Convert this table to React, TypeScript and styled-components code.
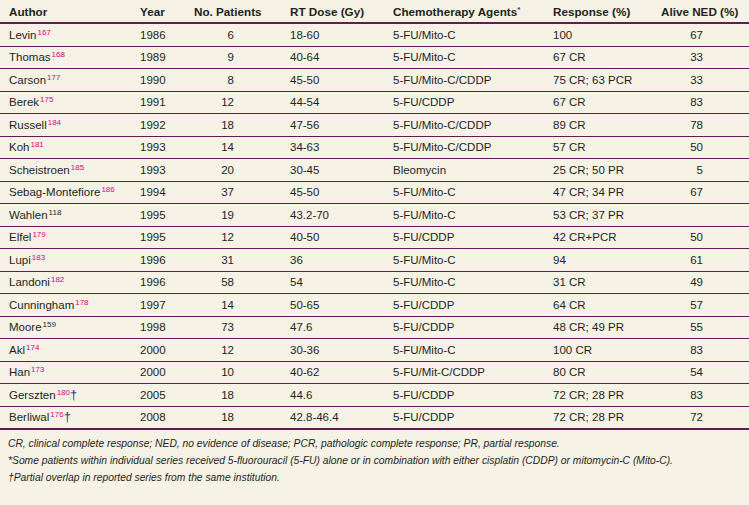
import React from "react";
import styled, { createGlobalStyle } from "styled-components";

const Global = createGlobalStyle`
  html, body { margin: 0; padding: 0; background: #f6f2e6; }
  body { font-family: "Liberation Sans", Arial, sans-serif; color: #231f20; }
`;

const COLS = "131px 54px 96px 103px 160px 108px 1fr";

const Page = styled.div`
  width: 749px;
  height: 505px;
  background: #f6f2e6;
  overflow: hidden;
`;

const HeadRow = styled.div`
  display: grid;
  grid-template-columns: ${COLS};
  padding-left: 9px;
  height: 24px;
  box-sizing: border-box;
  border-bottom: 2px solid #651a58;
  align-items: center;
  font-weight: 700;
  font-size: 11.7px;
`;

const Row = styled.div<{ $last?: boolean }>`
  display: grid;
  grid-template-columns: ${COLS};
  padding-left: 9px;
  height: ${(p) => (p.$last ? "23.5px" : "22.5px")};
  box-sizing: border-box;
  border-bottom: ${(p) => (p.$last ? "2px" : "1px")} solid #651a58;
  align-items: center;
  font-size: 11.5px;
`;

const Cell = styled.div<{ $right?: number }>`
  white-space: nowrap;
  text-align: ${(p) => (p.$right !== undefined ? "right" : "left")};
  padding-right: ${(p) => p.$right ?? 0}px;
`;

const Ref = styled.sup<{ $dark?: boolean }>`
  font-size: 8px;
  color: ${(p) => (p.$dark ? "#231f20" : "#e4007c")};
  vertical-align: 0;
  position: relative;
  top: -4px;
  margin-left: 1px;
  line-height: 0;
`;

const Dagger = styled.span`
  color: #2d2f8e;
  font-size: 13px;
  line-height: 0;
`;

const Star = styled.sup`
  color: #3a2c8c;
  font-size: 8px;
  line-height: 0;
  vertical-align: 0;
  position: relative;
  top: -4px;
`;

const Notes = styled.div`
  padding: 5px 0 0 8px;
  font-style: italic;
  font-size: 10.3px;
  line-height: 17px;
`;

type R = {
  a: string;
  ref: string;
  dark?: boolean;
  dag?: boolean;
  y: string;
  n: string;
  d: string;
  c: string;
  r: string;
  ned: string;
};

const rows: R[] = [
  { a: "Levin", ref: "167", y: "1986", n: "6", d: "18-60", c: "5-FU/Mito-C", r: "100", ned: "67" },
  { a: "Thomas", ref: "168", y: "1989", n: "9", d: "40-64", c: "5-FU/Mito-C", r: "67 CR", ned: "33" },
  { a: "Carson", ref: "177", y: "1990", n: "8", d: "45-50", c: "5-FU/Mito-C/CDDP", r: "75 CR; 63 PCR", ned: "33" },
  { a: "Berek", ref: "175", y: "1991", n: "12", d: "44-54", c: "5-FU/CDDP", r: "67 CR", ned: "83" },
  { a: "Russell", ref: "184", y: "1992", n: "18", d: "47-56", c: "5-FU/Mito-C/CDDP", r: "89 CR", ned: "78" },
  { a: "Koh", ref: "181", y: "1993", n: "14", d: "34-63", c: "5-FU/Mito-C/CDDP", r: "57 CR", ned: "50" },
  { a: "Scheistroen", ref: "185", y: "1993", n: "20", d: "30-45", c: "Bleomycin", r: "25 CR; 50 PR", ned: "5" },
  { a: "Sebag-Montefiore", ref: "186", y: "1994", n: "37", d: "45-50", c: "5-FU/Mito-C", r: "47 CR; 34 PR", ned: "67" },
  { a: "Wahlen", ref: "118", dark: true, y: "1995", n: "19", d: "43.2-70", c: "5-FU/Mito-C", r: "53 CR; 37 PR", ned: "" },
  { a: "Elfel", ref: "179", y: "1995", n: "12", d: "40-50", c: "5-FU/CDDP", r: "42 CR+PCR", ned: "50" },
  { a: "Lupi", ref: "183", y: "1996", n: "31", d: "36", c: "5-FU/Mito-C", r: "94", ned: "61" },
  { a: "Landoni", ref: "182", y: "1996", n: "58", d: "54", c: "5-FU/Mito-C", r: "31 CR", ned: "49" },
  { a: "Cunningham", ref: "178", y: "1997", n: "14", d: "50-65", c: "5-FU/CDDP", r: "64 CR", ned: "57" },
  { a: "Moore", ref: "159", dark: true, y: "1998", n: "73", d: "47.6", c: "5-FU/CDDP", r: "48 CR; 49 PR", ned: "55" },
  { a: "Akl", ref: "174", y: "2000", n: "12", d: "30-36", c: "5-FU/Mito-C", r: "100 CR", ned: "83" },
  { a: "Han", ref: "173", y: "2000", n: "10", d: "40-62", c: "5-FU/Mit-C/CDDP", r: "80 CR", ned: "54" },
  { a: "Gerszten", ref: "180", dag: true, y: "2005", n: "18", d: "44.6", c: "5-FU/CDDP", r: "72 CR; 28 PR", ned: "83" },
  { a: "Berliwal", ref: "176", dag: true, y: "2008", n: "18", d: "42.8-46.4", c: "5-FU/CDDP", r: "72 CR; 28 PR", ned: "72" },
];

export default function App() {
  return (
    <Page>
      <Global />
      <HeadRow>
        <Cell>Author</Cell>
        <Cell>Year</Cell>
        <Cell>No. Patients</Cell>
        <Cell>RT Dose (Gy)</Cell>
        <Cell>
          Chemotherapy Agents<Star>*</Star>
        </Cell>
        <Cell>Response (%)</Cell>
        <Cell>Alive NED (%)</Cell>
      </HeadRow>
      {rows.map((r, i) => (
        <Row key={r.a} $last={i === rows.length - 1}>
          <Cell>
            {r.a}
            <Ref $dark={r.dark}>{r.ref}</Ref>
            {r.dag && <Dagger>†</Dagger>}
          </Cell>
          <Cell>{r.y}</Cell>
          <Cell $right={56}>{r.n}</Cell>
          <Cell>{r.d}</Cell>
          <Cell>{r.c}</Cell>
          <Cell>{r.r}</Cell>
          <Cell $right={46}>{r.ned}</Cell>
        </Row>
      ))}
      <Notes>
        <div>
          CR, clinical complete response; NED, no evidence of disease; PCR, pathologic complete response; PR, partial
          response.
        </div>
        <div>
          *Some patients within individual series received 5-fluorouracil (5-FU) alone or in combination with either
          cisplatin (CDDP) or mitomycin-C (Mito-C).
        </div>
        <div>†Partial overlap in reported series from the same institution.</div>
      </Notes>
    </Page>
  );
}
